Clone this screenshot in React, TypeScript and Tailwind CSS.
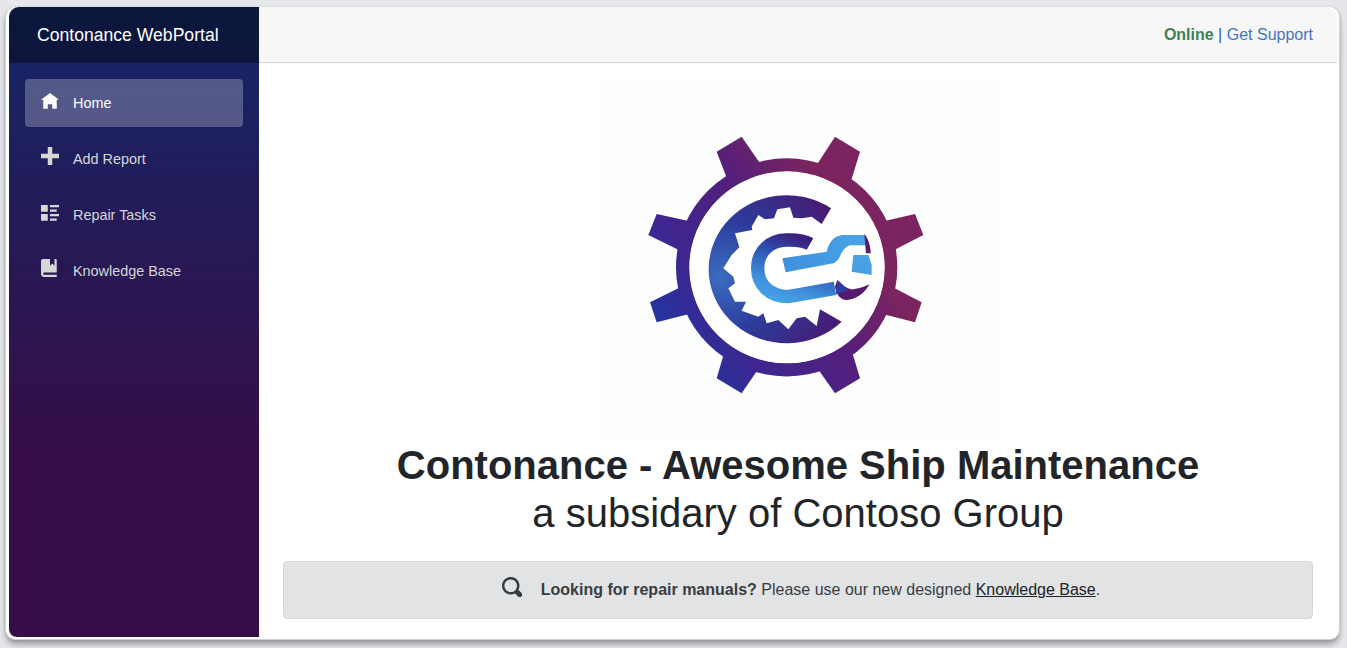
import React from "react";

const rawTeeth = [
  [[290, 95], [365, 50], [425, 122], [315, 175]],
  [[645, 50], [720, 95], [705, 172], [590, 122]],
  [[805, 295], [885, 282], [910, 345], [830, 395]],
  [[830, 500], [905, 547], [885, 607], [800, 590]],
  [[705, 695], [720, 775], [645, 820], [590, 755]],
  [[415, 760], [365, 820], [290, 775], [305, 695]],
  [[195, 590], [110, 607], [90, 547], [170, 500]],
  [[170, 395], [85, 345], [110, 282], [195, 295]],
];

// The base corners of each tooth are pulled into the ring so that no gap shows.
const teeth = rawTeeth.map((tooth) =>
  tooth
    .map(([x, y]) => {
      const dx = x - 500;
      const dy = y - 442;
      const near = Math.hypot(dx, dy) < 370;
      return near ? `${500 + dx * 0.93},${442 + dy * 0.93}` : `${x},${y}`;
    })
    .join(" ")
);

function Logo() {
  return (
    <svg viewBox="-66 -120 1200 1080" className="block w-full h-full blur-[0.4px]">
      <defs>
        <linearGradient id="outer" gradientUnits="userSpaceOnUse" x1="200" y1="700" x2="800" y2="300">
          <stop offset="0" stopColor="#27339f" />
          <stop offset="0.2" stopColor="#3d2690" />
          <stop offset="0.55" stopColor="#531f7c" />
          <stop offset="0.85" stopColor="#7a2460" />
          <stop offset="1" stopColor="#7c2460" />
        </linearGradient>
        <radialGradient id="inner" gradientUnits="userSpaceOnUse" cx="300" cy="470" r="380">
          <stop offset="0" stopColor="#3b6cc0" />
          <stop offset="0.45" stopColor="#2c3c9c" />
          <stop offset="1" stopColor="#481a72" />
        </radialGradient>
        <linearGradient id="cstroke" gradientUnits="userSpaceOnUse" x1="520" y1="345" x2="450" y2="550">
          <stop offset="0" stopColor="#3c1f7c" />
          <stop offset="0.3" stopColor="#2c50b0" />
          <stop offset="0.7" stopColor="#3f8fdc" />
          <stop offset="1" stopColor="#4aa8e8" />
        </linearGradient>
        <linearGradient id="wrench" gradientUnits="userSpaceOnUse" x1="490" y1="460" x2="750" y2="360">
          <stop offset="0" stopColor="#3f90e0" />
          <stop offset="1" stopColor="#4aa4e6" />
        </linearGradient>
      </defs>
      <rect x="-66" y="-120" width="1200" height="1080" fill="#fdfefe" />
      <g fill="url(#outer)">
        {teeth.map((p) => (
          <polygon key={p} points={p} />
        ))}
        <path
          fillRule="evenodd"
          d="M168 442a332 327 0 1 0 664 0a332 327 0 1 0 -664 0zM208 442a293 288 0 1 1 586 0a293 288 0 1 1 -586 0z"
        />
      </g>
      <ellipse cx="501" cy="442" rx="292" ry="287" fill="#ffffff" />
      <path
        fill="url(#inner)"
        d="M633 265L605 312L575 290L545 295L520 293L510 262L472 268L462 295L435 298L415 285L395 320L397 330L345 340L358 382L335 405L310 445L340 470L345 490L325 505L345 545L378 545L365 572L415 590L430 580L440 610L475 600L505 628L530 595L555 590L590 618L600 568L665 605A234 222 0 1 1 633 265Z"
      />
      <path
        fill="none"
        stroke="url(#cstroke)"
        strokeWidth="40"
        d="M570 372C545 358 520 360 500 360C450 360 413 395 413 445C413 495 450 530 505 530L645 505"
      />
      <path
        fill="url(#wrench)"
        d="M487 415L497 457L640 430C665 420 660 385 690 376L738 376L735 345L665 345C635 350 625 375 620 395Z"
      />
      <path fill="url(#wrench)" d="M700 405L745 405L755 435L755 465L695 455Z" />
      <path fill="#571a70" d="M733 342C745 355 752 380 752 400L738 400Z" />
      <path fill="#561a6c" d="M652 480C665 490 680 510 700 508C720 505 735 500 748 493C735 520 705 540 680 540C665 538 650 530 645 500Z" />
      <path fill="#2c3fa8" d="M652 482C665 490 675 505 685 510C670 515 655 522 648 522Z" />
    </svg>
  );
}

function Oi({ d, className }: { d: string; className?: string }) {
  return (
    <svg viewBox="0 0 8 8" fill="currentColor" className={className}>
      <path d={d} />
    </svg>
  );
}

const nav = [
  { label: "Home", active: true, shift: "mb-[2px]", d: "M4 0l-4 3h1v4h2v-2h2v2h2v-4.03l1 .03-4-3z" },
  { label: "Add Report", active: false, shift: "mb-[6px]", d: "M3 0v3h-3v2h3v3h2v-3h3v-2h-3v-3h-2z" },
  {
    label: "Repair Tasks",
    active: false,
    shift: "mb-[2px]",
    d: "M0 0v3h3v-3h-3zm4 0v1h4v-1h-4zm0 2v1h3v-1h-3zm-4 2v3h3v-3h-3zm4 0v1h4v-1h-4zm0 2v1h3v-1h-3z",
  },
  {
    label: "Knowledge Base",
    active: false,
    shift: "mb-[6px]",
    d: "M1 0c-.07 0-.13.01-.19.03-.39.08-.7.39-.78.78-.03.06-.03.12-.03.19v5.5c0 .83.67 1.5 1.5 1.5h5.5v-1h-5.5c-.28 0-.5-.22-.5-.5s.22-.5.5-.5h5.5v-5.5c0-.28-.22-.5-.5-.5h-.5v3l-1-1-1 1v-3h-3z",
  },
];

export default function App() {
  return (
    <div className="h-[648px] w-full overflow-hidden bg-[#e6e7eb] pl-[5px] pr-[7px] pt-[7px] font-['Liberation_Sans',Arial,sans-serif]">
      <div className="flex h-[633px] rounded-[10px] border-r border-b border-l border-[#d0d0d0] bg-white pb-[2px] pl-[3px] pr-[2px] shadow-[0_5px_6px_-1px_rgba(0,0,0,0.35),0_0_3px_rgba(0,0,0,0.1)]">
        <aside className="flex w-[250px] shrink-0 flex-col overflow-hidden rounded-bl-[8px] rounded-tl-[10px] bg-[linear-gradient(180deg,#142768_0%,#350e47_70%)]">
          <div className="flex h-[56px] shrink-0 items-center bg-[rgba(0,0,0,0.4)] pl-[28px] text-[17.6px] text-white">
            Contonance WebPortal
          </div>
          <nav className="flex flex-col gap-2 px-4 pt-4">
            {nav.map((n) => (
              <a
                key={n.label}
                className={
                  n.active
                    ? "flex h-[48px] items-center gap-[14px] rounded bg-[rgba(255,255,255,0.25)] pl-4 text-[14.4px] text-white"
                    : "flex h-[48px] items-center gap-[14px] rounded pl-4 text-[14.4px] text-[#d7d7d7]"
                }
              >
                <Oi d={n.d} className={"h-[18px] w-[18px] shrink-0 " + n.shift} />
                <span className="mt-[2px]">{n.label}</span>
              </a>
            ))}
          </nav>
        </aside>
        <main className="flex min-w-0 flex-1 flex-col">
          <header className="flex h-[56px] shrink-0 items-center justify-end rounded-tr-[10px] border-b border-[#d6d5d5] bg-[#f7f7f7] pr-6 text-[16px] text-[#2a6496]">
            <span className="font-bold text-[#3f7f54]">Online</span>
            <span className="whitespace-pre"> | </span>
            <a className="text-[#4472c4]">Get Support</a>
          </header>
          <div className="flex flex-1 flex-col items-center px-6 pt-[17px]">
            <div className="h-[360px] w-[400px] shrink-0">
              <Logo />
            </div>
            <h1 className="mt-[1px] text-center text-[40px] leading-[48px] text-[#212529]">
              <div className="font-bold">Contonance - Awesome Ship Maintenance</div>
              <div>a subsidary of Contoso Group</div>
            </h1>
            <div className="mt-6 flex h-[58px] w-full items-center justify-center gap-[19px] rounded border border-[#d6d8db] bg-[#e2e3e5] pl-[6px] text-[16px] text-[#383d41]">
              <Oi
                className="mb-[6px] h-5 w-5 shrink-0"
                d="M3.5 0c-1.93 0-3.5 1.57-3.5 3.5s1.57 3.5 3.5 3.5c.59 0 1.17-.14 1.66-.41a1 1 0 0 0 .13.13l1 1a1.02 1.02 0 1 0 1.44-1.44l-1-1a1 1 0 0 0-.16-.13c.27-.49.44-1.06.44-1.66 0-1.93-1.57-3.5-3.5-3.5zm0 1c1.39 0 2.5 1.11 2.5 2.5 0 .66-.24 1.27-.66 1.72-.01.01-.02.02-.03.03a1 1 0 0 0-.13.13c-.44.4-1.04.63-1.69.63-1.39 0-2.5-1.11-2.5-2.5s1.11-2.5 2.5-2.5z"
              />
              <span>
                <b>Looking for repair manuals?</b> Please use our new designed{" "}
                <a className="text-[#202326] underline">Knowledge Base</a>.
              </span>
            </div>
          </div>
        </main>
      </div>
    </div>
  );
}
